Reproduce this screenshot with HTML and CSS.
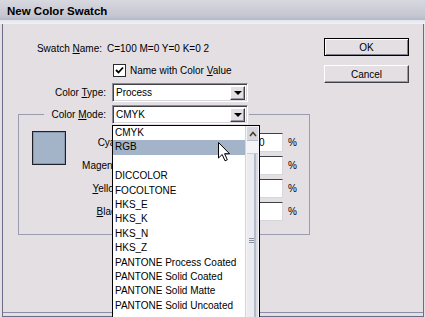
FILE: index.html
```html
<!DOCTYPE html>
<html>
<head>
<meta charset="utf-8">
<link rel="stylesheet" href="styles.css">
</head>
<body>
<div class="window">
  <div class="titlebar">New Color Swatch</div>
  <div class="band"></div>
  <div class="frame">
    <div class="form">
      <div class="row row-name">
        <span class="lbl lbl-name">Swatch <u>N</u>ame:</span>
        <span class="val">C=100 M=0 Y=0 K=0 2</span>
      </div>
      <div class="row row-check">
        <span class="checkbox"><svg width="9" height="9" viewBox="0 0 9 9"><path d="M1 4 L3.5 6.5 L8 1.5" fill="none" stroke="#000" stroke-width="1.8"/></svg></span>
        <span>Name with Color <u>V</u>alue</span>
      </div>
      <div class="row row-type">
        <span class="lbl lbl-type">Color <u>T</u>ype:</span>
        <div class="select"><span class="select-text">Process</span><span class="drop-btn"><span class="tri"></span></span></div>
      </div>
      <fieldset class="group">
        <legend class="legend">
          <span class="lbl lbl-mode">Color <u>M</u>ode:</span>
          <div class="select select-mode">
            <span class="select-text">CMYK</span><span class="drop-btn"><span class="tri"></span></span>
            <div class="list">
              <div class="items">
                <div class="item">CMYK</div>
                <div class="item sel">RGB</div>
                <div class="item"></div>
                <div class="item">DICCOLOR</div>
                <div class="item">FOCOLTONE</div>
                <div class="item">HKS_E</div>
                <div class="item">HKS_K</div>
                <div class="item">HKS_N</div>
                <div class="item">HKS_Z</div>
                <div class="item">PANTONE Process Coated</div>
                <div class="item">PANTONE Solid Coated</div>
                <div class="item">PANTONE Solid Matte</div>
                <div class="item">PANTONE Solid Uncoated</div>
              </div>
              <div class="scrollbar">
                <div class="sb-up"><svg width="8" height="6" viewBox="0 0 8 6"><path d="M1 5 L4 1.5 L7 5" fill="none" stroke="#4a3a2a" stroke-width="1.5"/></svg></div>
                <div class="sb-thumb"><span class="grip"></span></div>
              </div>
            </div>
          </div>
        </legend>
        <div class="group-inner">
          <div class="swatch"></div>
          <div class="fields">
            <span class="flabel">Cyan</span><span class="slider"></span><span class="input">100</span><span class="pct">%</span>
            <span class="flabel">Magenta</span><span class="slider"></span><span class="input">0</span><span class="pct">%</span>
            <span class="flabel"><u>Y</u>ellow</span><span class="slider"></span><span class="input">0</span><span class="pct">%</span>
            <span class="flabel"><u>B</u>lack</span><span class="slider"></span><span class="input">0</span><span class="pct">%</span>
          </div>
        </div>
      </fieldset>
    </div>
    <div class="actions">
      <button class="btn btn-default">OK</button>
      <button class="btn">Cancel</button>
    </div>
  </div>
  <svg class="cursor" width="13" height="20" viewBox="0 0 13 20"><path d="M0.5 0.5 L0.5 16 L4.2 12.5 L7 18.8 L9.3 17.8 L6.6 11.7 L11.5 11.7 Z" fill="#fff" stroke="#000" stroke-width="1"/></svg>
</div>
</body>
</html>
```
FILE: styles.css
```css
html, body {
  margin: 0;
  padding: 0;
  overflow: hidden;
  background: #e3dfe3;
}
.window {
  position: relative;
  width: 425px;
  height: 317px;
  overflow: hidden;
  font-family: "Liberation Sans", Arial, sans-serif;
  font-size: 10px;
  color: #000;
  background: #e3dfe3;
}
.titlebar {
  height: 20px;
  box-sizing: border-box;
  padding: 4px 0 0 7px;
  font-weight: bold;
  font-size: 11.5px;
  line-height: 14px;
  background: linear-gradient(#d8d8e0, #c4c6d0 80%, #b4b8c8);
}
.band {
  height: 4px;
  background: linear-gradient(#e4e6ee, #f2f2f6);
}
.frame {
  display: flex;
  height: 293px;
  box-sizing: border-box;
  border-left: 1px solid #6c6c88;
  margin-left: 2px;
  border-bottom: 1px solid #6c6c88;
  border-right: 1px solid #6c6c88;
  margin-right: 1px;
  box-shadow: inset 0 -3px 0 #e3dfe3, inset 0 -4px 0 #8c8ca4;
}
.form {
  width: 306px;
  padding-top: 17px;
  display: flex;
  flex-direction: column;
}
.row {
  display: flex;
  align-items: center;
  white-space: nowrap;
}
.lbl {
  flex: none;
  text-align: right;
  white-space: nowrap;
}
.row-name {
  height: 14px;
  gap: 5px;
}
.lbl-name { width: 99px; }
.row-check {
  height: 14px;
  margin-top: 8px;
  padding-left: 110px;
  gap: 4px;
}
.checkbox {
  width: 11px;
  height: 11px;
  border: 1px solid #2a2a30;
  background: #fff;
  display: flex;
  align-items: center;
  justify-content: center;
}
.row-type {
  margin-top: 6px;
  gap: 6px;
}
.lbl-type { width: 103px; }
.select {
  position: relative;
  width: 136px;
  height: 19px;
  box-sizing: border-box;
  background: #fff;
  border-top: 1px solid #8c8c98;
  border-left: 1px solid #8c8c98;
  border-right: 1px solid #fff;
  border-bottom: 1px solid #fff;
  box-shadow: inset 1px 1px 0 #404048, inset -1px -1px 0 #d8d6dc;
  display: flex;
  align-items: center;
  padding: 0 2px 0 3px;
}
.select-text { flex: 1; }
.drop-btn {
  width: 15px;
  height: 14px;
  box-sizing: border-box;
  background: #e3dfe3;
  border-top: 1px solid #fff;
  border-left: 1px solid #fff;
  border-right: 1px solid #404048;
  border-bottom: 1px solid #404048;
  box-shadow: inset -1px -1px 0 #9a98a4;
  display: flex;
  align-items: center;
  justify-content: center;
}
.tri {
  width: 0;
  height: 0;
  border-left: 4px solid transparent;
  border-right: 4px solid transparent;
  border-top: 4px solid #000;
}
.group {
  margin: 3px 0 0 15px;
  padding: 0;
  width: 292px;
  min-width: 0;
  box-sizing: border-box;
  border: 1px solid #9c9cb0;
}
.legend {
  margin-left: 25px;
  padding: 0 1px 0 3px;
  display: flex;
  align-items: center;
  gap: 6px;
  white-space: nowrap;
}
.lbl-mode { width: 59px; }
.list {
  position: absolute;
  z-index: 2;
  top: 19px;
  left: -1px;
  width: 148px;
  height: 210px;
  box-sizing: border-box;
  border: 1px solid #000;
  background: #fff;
  display: flex;
}
.items {
  flex: 1;
  min-width: 0;
}
.item {
  height: 14.4px;
  line-height: 14.4px;
  padding-left: 2px;
  white-space: nowrap;
  overflow: hidden;
}
.item.sel {
  background: #a4b4c8;
}
.scrollbar {
  width: 14px;
  box-sizing: border-box;
  padding: 1px 1px 0 1px;
  background: #f4f4f8;
  border-left: 1px solid #d4d4dc;
  display: flex;
  flex-direction: column;
}
.sb-up {
  height: 13px;
  background: #d6d6de;
  border-bottom: 1px solid #b8bcc8;
  display: flex;
  align-items: center;
  justify-content: center;
}
.sb-thumb {
  margin-top: 12px;
  height: 180px;
  background: linear-gradient(90deg, #ececf0 0 60%, #b4bccc 60% 85%, #dcdce4 85%);
  border-top: 1px solid #c8ccd8;
  display: flex;
  justify-content: center;
  padding-top: 84px;
  box-sizing: border-box;
}
.grip {
  width: 5px;
  height: 5px;
  margin-left: -3px;
  background: repeating-linear-gradient(#8890a0 0 1px, transparent 1px 2px);
}
.group-inner {
  display: flex;
  align-items: flex-start;
  padding: 7px 0 13px 13px;
}
.swatch {
  width: 34px;
  height: 34px;
  box-sizing: border-box;
  background: #a4b4c8;
  border: 1px solid #202028;
  box-shadow: inset 0 0 0 1px #8898b0;
}
.fields {
  margin: 2px 0 0 6px;
  display: grid;
  grid-template-columns: 49px 114px 38px auto;
  column-gap: 5px;
  row-gap: 4px;
  align-items: center;
}
.flabel {
  text-align: right;
  white-space: nowrap;
}
.slider {
  height: 2px;
  background: #9090a0;
}
.input {
  height: 19px;
  box-sizing: border-box;
  background: #fff;
  border-top: 1px solid #404048;
  border-left: 1px solid #404048;
  border-right: 1px solid #d8d6dc;
  border-bottom: 1px solid #d8d6dc;
  padding-left: 2px;
  line-height: 17px;
}
.actions {
  margin-left: 15px;
  padding-top: 14px;
  display: flex;
  flex-direction: column;
  gap: 9px;
}
.btn {
  width: 85px;
  height: 18px;
  padding: 0;
  font: inherit;
  color: #000;
  background: #e3dfe3;
  border-top: 1px solid #fff;
  border-left: 1px solid #fff;
  border-right: 1px solid #404048;
  border-bottom: 1px solid #404048;
  box-shadow: inset -1px -1px 0 #9a98a4;
}
.btn-default {
  border: 1px solid #000;
  box-shadow: inset 1px 1px 0 #fff, inset -1px -1px 0 #808090;
}
.cursor {
  position: absolute;
  left: 218px;
  top: 142px;
  z-index: 5;
}
```
